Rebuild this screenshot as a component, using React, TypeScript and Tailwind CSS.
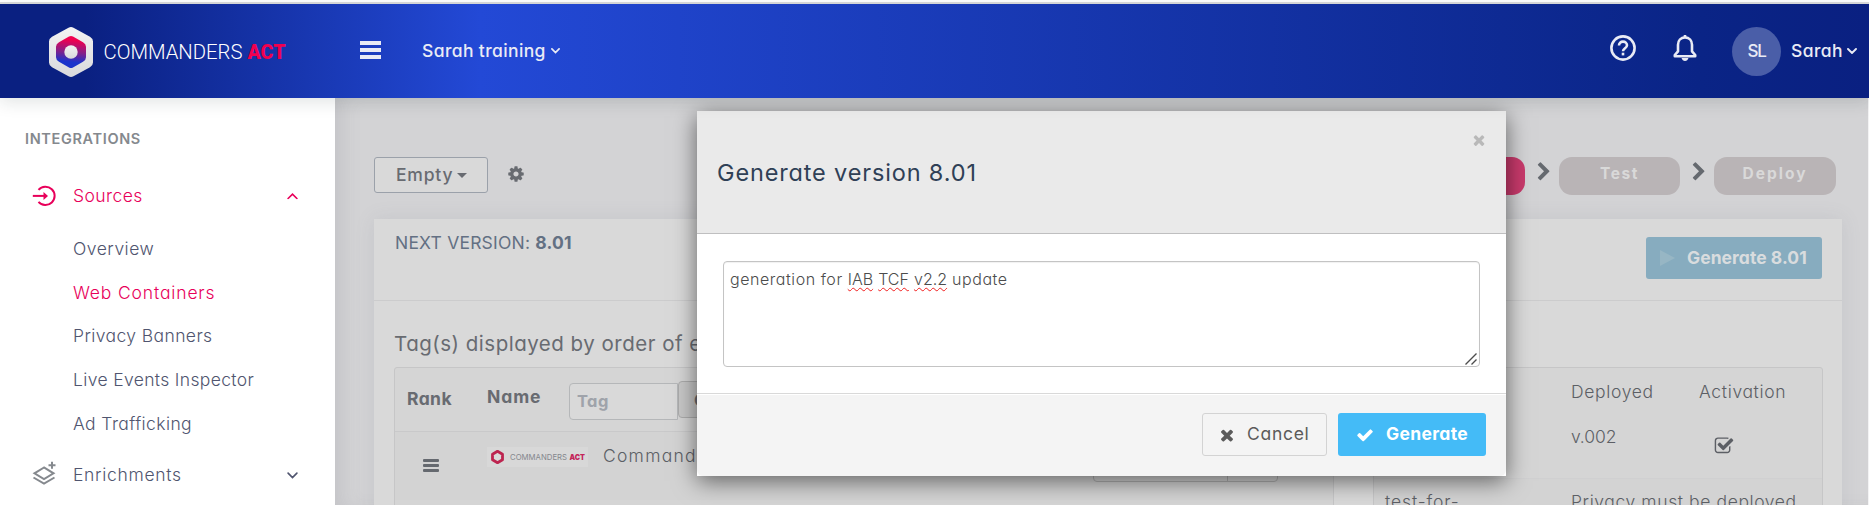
import type { ReactNode } from "react";

const GLYPHS = {
  cog: "M1152 896q0-106-75-181t-181-75-181 75-75 181 75 181 181 75 181-75 75-181zm512-109v222q0 12-8 23t-20 13l-185 28q-19 54-39 91 35 50 107 138 10 12 10 25t-9 23q-27 37-99 108t-94 71q-12 0-26-9l-138-108q-44 23-91 38-16 136-29 186-7 28-36 28h-222q-14 0-24.5-8.5t-11.5-21.5l-28-184q-49-16-90-37l-141 107q-10 9-25 9-14 0-25-11-126-114-165-168-7-10-7-23 0-12 8-23 15-21 51-66.5t54-70.5q-27-50-41-99l-183-27q-13-2-21-12.5t-8-23.5v-222q0-12 8-23t19-13l186-28q14-46 39-92-40-57-107-138-10-12-10-24 0-10 9-23 26-36 98.5-107.5t94.5-71.5q13 0 26 10l138 107q44-23 91-38 16-136 29-186 7-28 36-28h222q14 0 24.5 8.5t11.5 21.5l28 184q49 16 90 37l142-107q9-9 24-9 13 0 25 10 129 119 165 170 7 8 7 22 0 12-8 23-15 21-51 66.5t-54 70.5q26 50 41 98l183 28q13 2 21 12.5t8 23.5z",
  times:
    "M1490 1322q0 40-28 68l-136 136q-28 28-68 28t-68-28l-294-294-294 294q-28 28-68 28t-68-28l-136-136q-28-28-28-68t28-68l294-294-294-294q-28-28-28-68t28-68l136-136q28-28 68-28t68 28l294 294 294-294q28-28 68-28t68 28l136 136q28 28 28 68t-28 68l-294 294 294 294q28 28 28 68z",
  check:
    "M1671 566q0 40-28 68l-724 724-136 136q-28 28-68 28t-68-28l-136-136-362-362q-28-28-28-68t28-68l136-136q28-28 68-28t68 28l294 295 656-657q28-28 68-28t68 28l136 136q28 28 28 68z",
  checkSquare:
    "M1472 930v318q0 119-84.5 203.5t-203.5 84.5h-832q-119 0-203.5-84.5t-84.5-203.5v-832q0-119 84.5-203.5t203.5-84.5h832q63 0 117 25 15 7 18 23 3 17-9 29l-49 49q-10 10-23 10-3 0-9-2-23-6-45-6h-832q-66 0-113 47t-47 113v832q0 66 47 113t113 47h832q66 0 113-47t47-113v-254q0-13 9-22l64-64q10-10 23-10 6 0 12 3 20 8 20 29zm231-489l-814 814q-24 24-57 24t-57-24l-430-430q-24-24-24-57t24-57l110-110q24-24 57-24t57 24l263 263 647-647q24-24 57-24t57 24l110 110q24 24 24 57t-24 57z",
  chevron:
    "M1363 877l-742 742q-19 19-45 19t-45-19l-166-166q-19-19-19-45t19-45l531-531-531-531q-19-19-19-45t19-45l166-166q19-19 45-19t45 19l742 742q19 19 19 45t-19 45z",
};

function Glyph({ name, className }: { name: keyof typeof GLYPHS; className: string }) {
  return (
    <svg viewBox="0 0 1792 1792" className={`shrink-0 fill-current ${className}`}>
      <path d={GLYPHS[name]} />
    </svg>
  );
}

function Caret({ className }: { className: string }) {
  return (
    <svg viewBox="0 0 10 6" className={`shrink-0 ${className}`} fill="none" stroke="currentColor" strokeLinecap="round">
      <path d="M1 1l4 4 4-4" />
    </svg>
  );
}

function Logo() {
  return (
    <svg width="240" height="60" viewBox="0 0 240 60" className="shrink-0">
      <defs>
        <linearGradient id="rim" x1="0" y1="0" x2="0" y2="1">
          <stop offset="0" stopColor="#f3f3f3" />
          <stop offset="1" stopColor="#d9d9dc" />
        </linearGradient>
        <linearGradient id="core" x1="0.5" y1="0" x2="0.4" y2="1">
          <stop offset="0.12" stopColor="#f0004f" />
          <stop offset="0.5" stopColor="#83208a" />
          <stop offset="0.8" stopColor="#1b33cb" />
        </linearGradient>
      </defs>
      <path d="M19.500 4.800q2.500-1.400 5 0l16.500 9q3 1.800 3 4.800v20.800q0 3-3 4.800l-16.500 9q-2.500 1.400-5 0l-16.500-9q-3-1.800-3-4.800v-20.800q0-3 3-4.800z" fill="url(#rim)" />
      <path d="M20 13.500q2-1.200 4 0l10 5.800q3 1.700 3 4.500v10.400q0 2.800-3 4.500l-10 5.800q-2 1.200-4 0l-10-5.800q-3-1.700-3-4.500v-10.400q0-2.800 3-4.500z" fill="url(#core)" />
      <circle cx="22" cy="29" r="6.700" fill="url(#rim)" />
      <text x="54.500" y="36" textLength="139" lengthAdjust="spacingAndGlyphs" fill="#fff" fontSize="21" fontFamily="Roboto" fontWeight="300">
        COMMANDERS
      </text>
      <text x="198.500" y="36" textLength="38" lengthAdjust="spacingAndGlyphs" fill="#f0004f" fontSize="21" fontFamily="Roboto" fontWeight="900">
        ACT
      </text>
    </svg>
  );
}

function Header() {
  return (
    <header className="relative z-30 flex h-[94px] w-full shrink-0 items-start bg-[linear-gradient(90deg,#0a2081_0px,#0a2081_85px,#2349d6_480px,#0a2486_1700px,#0a2081_1869px)] text-[#e9ebf5] shadow-[0_4px_16px_rgba(20,50,50,0.13)]">
      <div className="ml-[49px] mt-[19px] w-[311px]">
        <Logo />
      </div>
      <div className="mt-[37px] flex w-[21px] flex-col gap-[3px]">
        <span className="h-[4px] bg-current" />
        <span className="h-[4px] bg-current" />
        <span className="h-[4px] bg-current" />
      </div>
      <div className="ml-[41px] mt-[35px] flex h-6 items-center gap-[5px]">
        <span className="text-[17.5px] font-medium leading-6 tracking-[0.38px]">Sarah training</span>
        <Caret className="w-[9px] stroke-[1.9]" />
      </div>
      <svg viewBox="0 0 26 26" className="ml-auto mt-[31px] size-[26px]" fill="none" stroke="currentColor" strokeWidth="2.600">
        <circle cx="13" cy="13" r="11.600" />
        <path d="M9 10.600c0-2.400 1.800-4 4-4s4 1.500 4 3.700c0 2.900-4 3-4 6" />
        <path d="M13 17.700v2.700" />
      </svg>
      <svg viewBox="0 0 24 26" className="ml-[37px] mt-[31px] h-[26px] w-[24px]" fill="none" stroke="currentColor" strokeWidth="2.600" strokeLinejoin="round">
        <path d="M12 2.400c-4.300 0-7 3.200-7 7.300v6.600L1.800 20v1.200h20.400V20L19 16.300V9.700c0-4.100-2.700-7.300-7-7.300z" />
        <path d="M12 0v2" />
        <path d="M8.500 23h7q-1 3-3.500 3t-3.500-3z" fill="currentColor" stroke="none" />
      </svg>
      <div className="ml-[35px] mt-[23px] flex size-[49px] items-center justify-center rounded-full bg-[#4a5ea8] text-[17px] font-medium tracking-[-1.2px]">
        SL
      </div>
      <div className="ml-[10px] mr-[12px] mt-[35px] flex h-6 w-[66px] items-center justify-between">
        <span className="text-[17.5px] font-medium leading-6 tracking-[0.4px]">Sarah</span>
        <Caret className="w-[10px] stroke-[1.9]" />
      </div>
    </header>
  );
}

function SubItem({ className, children }: { className: string; children: ReactNode }) {
  return <li className={`h-[43.7px] pl-[73px] leading-[24px] ${className}`}>{children}</li>;
}

function Sidebar() {
  return (
    <aside className="relative w-[335px] shrink-0 bg-white text-[17.5px] font-light text-[#50556f]">
      <h2 className="pl-[25px] pt-[29px] text-[14.5px] font-semibold leading-6 tracking-[0.65px] text-[#85898e]">
        INTEGRATIONS
      </h2>
      <div className="mt-[33px] flex h-6 items-center text-[#e8005a]">
        <svg viewBox="0 0 24 22" className="ml-[32px] h-[22px] w-[24px]" fill="none" stroke="currentColor" strokeWidth="2">
          <path d="M6.500 4.800A9.200 9.200 0 1 1 6.500 16.900" />
          <path d="M.8 10.900h12" />
          <path d="M11.500 6.900l4.500 4-4.500 4z" fill="currentColor" stroke="none" />
        </svg>
        <span className="ml-[17px] leading-6 tracking-[0.45px]">Sources</span>
        <Caret className="ml-auto mr-[37px] w-[11px] rotate-180 stroke-[1.500]" />
      </div>
      <ul className="mt-[29px]">
        <SubItem className="tracking-[0.5px]">Overview</SubItem>
        <SubItem className="tracking-[0.85px] text-[#e8005a]">Web Containers</SubItem>
        <SubItem className="tracking-[0.4px]">Privacy Banners</SubItem>
        <SubItem className="tracking-[0.35px]">Live Events Inspector</SubItem>
        <SubItem className="tracking-[0.4px]">Ad Trafficking</SubItem>
      </ul>
      <div className="mt-[8px] flex h-6 items-center">
        <svg viewBox="0 0 24 24" className="mb-[4px] ml-[32px] size-[24px] text-[#85898e]" fill="none" stroke="currentColor" strokeWidth="2">
          <path d="M12 6.500L2.500 12.300 12 18l9.500-5.700z" />
          <path d="M1.500 16.500L12 22.600l10.500-6.100" />
          <path d="M20 .7v7M16.500 4.200h7" />
        </svg>
        <span className="ml-[17px] leading-6 tracking-[0.7px]">Enrichments</span>
        <Caret className="ml-auto mr-[37px] w-[11px] stroke-[1.500]" />
      </div>
    </aside>
  );
}

function Toolbar() {
  return (
    <div className="flex h-[38px] items-start text-[#686b71]">
      <button className="flex h-[36px] w-[114px] items-center rounded-[3px] border border-[#9ba1aa] bg-[#d9d9d9] pl-[21px] text-left text-[17.5px] font-medium tracking-[0.8px]">
        <span className="w-[61px]">Empty</span>
        <span className="border-x-[5px] border-t-[5px] border-x-transparent border-t-current" />
      </button>
      <Glyph name="cog" className="ml-[19px] mt-[8px] size-[18px]" />
      <div className="ml-auto mr-[32px] flex items-start text-[15.5px] font-bold leading-[33px] tracking-[1.6px] text-[#d9d9d9]">
        <span className="h-[38px] w-[122px] rounded-[13px] bg-[#c93a6c] pl-[20px]">Generate</span>
        <Glyph name="chevron" className="ml-[9px] mt-[5px] size-[20px] text-[#65696f]" />
        <span className="ml-[5px] h-[38px] w-[121px] rounded-[13px] bg-[#b9b4b6] text-center">Test</span>
        <Glyph name="chevron" className="ml-[9px] mt-[5px] size-[20px] text-[#65696f]" />
        <span className="ml-[5px] h-[38px] w-[122px] rounded-[13px] bg-[#b9b4b6] text-center tracking-[2px]">Deploy</span>
      </div>
    </div>
  );
}

function TagTable() {
  return (
    <div className="h-[200px] w-[940px] rounded-t-[3px] border border-[#c6c6c7] bg-[#d5d5d5]">
      <div className="flex h-[64px] border-b border-[#c9c9ca] text-[17.5px] font-bold leading-6">
        <span className="ml-[12px] mt-[19px] w-[80px] tracking-[0.4px]">Rank</span>
        <span className="mt-[17px] w-[82px] tracking-[0.9px]">Name</span>
        <span className="mt-[15px] h-[37px] w-[109px] rounded-l-[4px] border border-[#b5b7b9] bg-[#d9d9d9] pl-[7px] pt-[5px] text-[16.5px] tracking-[0.4px] text-[#9fa3aa]">
          Tag
        </span>
        <span className="mt-[13px] h-[37px] w-[90px] rounded-[4px] border border-[#acacac] bg-[#c8c8c8] pl-[15px] pt-[6px] text-[16px]">Category</span>
      </div>
      <div className="flex h-[68px] bg-[#d3d3d3]">
        <div className="ml-[28px] mt-[27px] flex w-[16px] flex-col gap-[2px]">
          <span className="h-[3px] rounded-[1px] bg-[#65696f]" />
          <span className="h-[3px] rounded-[1px] bg-[#65696f]" />
          <span className="h-[3px] rounded-[1px] bg-[#65696f]" />
        </div>
        <div className="ml-[48px] mt-[15px] flex h-[20px] w-[101px] items-center bg-[#d8d8d8] pl-[4px]">
          <svg width="95" height="16" viewBox="0 0 95 16">
            <path d="M6.500 2.300l5 2.900v5.600l-5 2.900-5-2.900V5.200z" fill="#dadada" stroke="#bd2550" strokeWidth="2.800" strokeLinejoin="round" />
            <text x="19" y="11.300" textLength="57" lengthAdjust="spacingAndGlyphs" fontFamily="Inter" fontSize="8" fill="#84878d">COMMANDERS</text>
            <text x="78.500" y="11.300" textLength="15.500" lengthAdjust="spacingAndGlyphs" fontFamily="Inter" fontSize="8" fontWeight="900" fill="#c4255b">ACT</text>
          </svg>
        </div>
        <span className="ml-[15px] mt-[12px] text-[17.5px] font-light leading-6 tracking-[1.25px] text-[#5c5f65]">Commanders Act</span>
        <div className="ml-auto mr-[55px] mt-[12px] flex h-[38px] w-[185px] rounded-[4px] border border-[#b0b0b0]">
          <span className="w-[134px] border-r border-[#b0b0b0]" />
        </div>
      </div>
    </div>
  );
}

function PrivacyTable() {
  return (
    <div className="h-[200px] w-[450px] rounded-t-[3px] border border-[#c6c6c7] bg-[#d5d5d5] text-[17.5px] font-light leading-6 text-[#5c5f65]">
      <div className="flex h-[111px] border-b border-[#d0d0d1] pl-[197px]">
        <div className="w-[128px]">
          <p className="mt-[12px] tracking-[0.65px]">Deployed</p>
          <p className="mt-[21px] tracking-[-0.1px]">v.002</p>
        </div>
        <div>
          <p className="mt-[12px] tracking-[0.65px]">Activation</p>
          <Glyph name="checkSquare" className="ml-[15px] mt-[32px] size-[20px]" />
        </div>
      </div>
      <div className="flex bg-[#d3d3d3] pl-[11px] pt-[11px]">
        <span className="w-[186px] tracking-[0.9px]">test-for-</span>
        <span className="tracking-[0.6px]">Privacy must be deployed</span>
      </div>
    </div>
  );
}

function Workspace() {
  return (
    <main className="flex-1 overflow-hidden border-r border-[#f3f3f4] bg-[#d3d3d5] pl-[39px] pt-[59px] text-[#686b71] shadow-[inset_14px_0_20px_-8px_rgba(110,115,125,0.16)]">
      <Toolbar />
      <section className="mt-[24px] h-[300px] w-[1468px] bg-[#d9d9d9] shadow-[0_0_18px_rgba(110,115,130,0.13)]">
        <div className="flex h-[82px] justify-between border-b border-[#cccccd] pl-[21px] pr-[20px]">
          <p className="pt-[12px] text-[17.5px] leading-6 tracking-[0.2px] text-[#637083]">
            NEXT VERSION: <b className="font-bold">8.01</b>
          </p>
          <button className="mt-[18px] flex h-[42px] w-[176px] items-center rounded-[3px] bg-[#87acbf] pl-[14px] text-[17.5px] font-bold tracking-[0.05px] text-[#d9dcde]">
            <span className="mr-[12px] border-y-[8px] border-l-[15px] border-y-transparent border-l-[#97b6c4]" />
            Generate 8.01
          </button>
        </div>
        <h3 className="ml-[20px] mt-[28px] text-[20.5px] leading-[30px] tracking-[0.5px]">Tag(s) displayed by order of execution</h3>
        <div className="ml-[20px] mt-[8px] flex gap-[39px]">
          <TagTable />
          <PrivacyTable />
        </div>
      </section>
    </main>
  );
}

function Misspelled({ children }: { children: ReactNode }) {
  return (
    <span className="tracking-[0px] underline decoration-[#f02020] decoration-wavy decoration-1 underline-offset-[2px] [text-decoration-skip-ink:none]">
      {children}
    </span>
  );
}

function GenerateDialog() {
  return (
    <div role="dialog" className="absolute left-[697px] top-[111px] z-20 flex h-[365px] w-[809px] flex-col bg-white shadow-[0_5px_22px_rgba(0,0,0,0.55)]">
      <div className="flex h-[123px] justify-between border-b border-[#bfbfc0] bg-[#eaeaea] pl-[20px] pr-[19px]">
        <h1 className="pt-[44px] text-[23.5px] leading-[36px] tracking-[0.85px] text-[#2f4056]">Generate version 8.01</h1>
        <Glyph name="times" className="mt-[21px] size-[16px] text-[#b9b9b9]" />
      </div>
      <div className="relative ml-[26px] mt-[27px] h-[106px] w-[757px] rounded-[4px] border border-[#c4c4c4] pl-[6px] pt-[5px] text-[16px] font-light leading-6 tracking-[0.55px] text-[#4c4c4c] shadow-[inset_0_1px_1px_rgba(0,0,0,0.06)]">
        generation for <Misspelled>IAB</Misspelled> <Misspelled>TCF</Misspelled> <Misspelled>v2.2</Misspelled> update
        <svg viewBox="0 0 12 12" className="absolute bottom-[1px] right-[2px] size-[12px]" stroke="#4c4c4c" strokeWidth="1.400">
          <path d="M.5 11.500l11-11M6.500 11.500l5-5" />
        </svg>
      </div>
      <div className="mt-auto flex h-[83px] justify-end gap-[11px] rounded-b-[6px] border-t border-[#d9d9d9] bg-[#f4f4f4] pr-[20px] pt-[19px] text-[17.5px] shadow-[inset_0_1px_0_white]">
        <button className="flex h-[43px] w-[125px] items-center rounded-[3px] border border-[#d3d3d3] pl-[15px] text-[#5b5b5b]">
          <Glyph name="times" className="size-[18px]" />
          <span className="ml-[11px] tracking-[0.7px]">Cancel</span>
        </button>
        <button className="flex h-[43px] w-[148px] items-center rounded-[3px] bg-[#44bbf7] pl-[18px] font-bold tracking-[0.35px] text-white">
          <Glyph name="check" className="size-[18px]" />
          <span className="ml-[12px]">Generate</span>
        </button>
      </div>
    </div>
  );
}

export default function App() {
  return (
    <div className="relative flex h-[505px] w-[1869px] flex-col overflow-hidden bg-white font-[Inter,sans-serif] [font-feature-settings:'cv11']">
      <div className="h-[4px] shrink-0 border-b-2 border-[#dcdcdd] bg-white" />
      <Header />
      <div className="flex min-h-0 flex-1">
        <Sidebar />
        <Workspace />
      </div>
      <GenerateDialog />
    </div>
  );
}
